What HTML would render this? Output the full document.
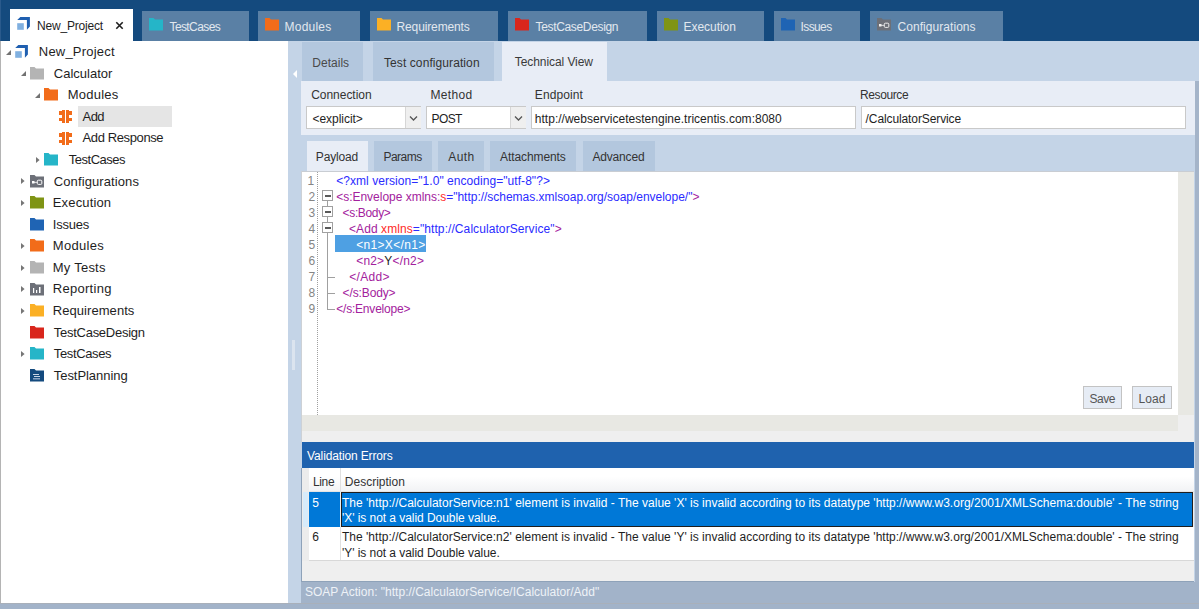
<!DOCTYPE html>
<html><head><meta charset="utf-8"><style>
html,body{margin:0;padding:0;width:1199px;height:609px;overflow:hidden;background:#c4d4e7;}
body>div,body>svg{position:absolute;}
body>div{white-space:pre;font-family:'Liberation Sans', sans-serif;box-sizing:content-box;}
</style></head><body>
<div style="left:0px;top:0px;width:1199px;height:41px;background:#144a7e;"></div>
<div style="left:0px;top:0px;width:1px;height:41px;background:#2a5a8c;"></div>
<div style="left:10px;top:9px;width:123px;height:32px;background:#ffffff;"></div>
<svg style="left:16px;top:14px" width="16" height="17" viewBox="0 0 16 17"><path d="M4.3,3 H13.9 V12.6 L10.9,15.7 V5.9 H1.2 Z" fill="#1f5fb0"/><rect x="1.2" y="9.2" width="6.6" height="6.6" fill="#80b0e0"/></svg>
<svg style="left:115px;top:21px" width="9" height="9" viewBox="0 0 9 9"><path d="M1.3,1.3 L7.7,7.7 M7.7,1.3 L1.3,7.7" stroke="#1e1e1e" stroke-width="1.6"/></svg>
<div style="left:142px;top:11px;width:107px;height:30px;background:#5a80a5;"></div>
<svg style="left:149px;top:18px" width="15" height="13.5" viewBox="0 0 15 13.5"><path d="M0,0 H4.5 L6.0,1.5 H14 V12.5 H0 Z" fill="#25b5c8"/></svg>
<div style="left:258px;top:11px;width:102px;height:30px;background:#5a80a5;"></div>
<svg style="left:265px;top:18px" width="15" height="13.5" viewBox="0 0 15 13.5"><path d="M0,0 H4.5 L6.0,1.5 H14 V12.5 H0 Z" fill="#f26c1a"/></svg>
<div style="left:370px;top:11px;width:128px;height:30px;background:#5a80a5;"></div>
<svg style="left:377px;top:18px" width="15" height="13.5" viewBox="0 0 15 13.5"><path d="M0,0 H4.5 L6.0,1.5 H14 V12.5 H0 Z" fill="#fbb025"/></svg>
<div style="left:508px;top:11px;width:139px;height:30px;background:#5a80a5;"></div>
<svg style="left:515px;top:18px" width="15" height="13.5" viewBox="0 0 15 13.5"><path d="M0,0 H4.5 L6.0,1.5 H14 V12.5 H0 Z" fill="#d9261c"/></svg>
<div style="left:657px;top:11px;width:107px;height:30px;background:#5a80a5;"></div>
<svg style="left:664px;top:18px" width="15" height="13.5" viewBox="0 0 15 13.5"><path d="M0,0 H4.5 L6.0,1.5 H14 V12.5 H0 Z" fill="#7f9414"/></svg>
<div style="left:774px;top:11px;width:86px;height:30px;background:#5a80a5;"></div>
<svg style="left:781px;top:18px" width="15" height="13.5" viewBox="0 0 15 13.5"><path d="M0,0 H4.5 L6.0,1.5 H14 V12.5 H0 Z" fill="#1f64b4"/></svg>
<div style="left:870px;top:11px;width:133px;height:30px;background:#5a80a5;"></div>
<svg style="left:877px;top:18px" width="15" height="13.5" viewBox="0 0 15 13.5"><path d="M0,0 H4.5 L6.0,1.5 H14 V12.5 H0 Z" fill="#6d7078"/><rect x="2" y="6" width="2.5" height="2.5" fill="#eee"/><rect x="4" y="6.9" width="3" height="0.8" fill="#eee"/><rect x="7.3" y="5.2" width="4.5" height="4.2" rx="1" fill="none" stroke="#eee" stroke-width="1"/></svg>
<div style="left:0px;top:41px;width:1px;height:562px;background:#b4b4b4;"></div>
<div style="left:1px;top:41px;width:287px;height:562px;background:#ffffff;"></div>
<div style="left:0px;top:603px;width:1199px;height:1px;background:#a9b0ba;"></div>
<div style="left:0px;top:604px;width:1199px;height:5px;background:#a2b3c9;"></div>
<div style="left:78px;top:106px;width:94px;height:21px;background:#e5e5e5;"></div>
<svg style="left:14px;top:42px" width="16" height="17" viewBox="0 0 16 17"><path d="M4.3,3 H13.9 V12.6 L10.9,15.7 V5.9 H1.2 Z" fill="#1f5fb0"/><rect x="1.2" y="9.2" width="6.6" height="6.6" fill="#80b0e0"/></svg>
<svg style="left:6px;top:50px" width="6" height="6" viewBox="0 0 6 6"><path d="M5,0 V5 H0 Z" fill="#727272"/></svg>
<svg style="left:30px;top:67px" width="15" height="13.5" viewBox="0 0 15 13.5"><path d="M0,0 H4.5 L6.0,1.5 H14 V12.5 H0 Z" fill="#b4b4b4"/></svg>
<svg style="left:21px;top:71px" width="6" height="6" viewBox="0 0 6 6"><path d="M5,0 V5 H0 Z" fill="#727272"/></svg>
<svg style="left:44px;top:88px" width="15" height="13.5" viewBox="0 0 15 13.5"><path d="M0,0 H4.5 L6.0,1.5 H14 V12.5 H0 Z" fill="#f26c1a"/></svg>
<svg style="left:35px;top:93px" width="6" height="6" viewBox="0 0 6 6"><path d="M5,0 V5 H0 Z" fill="#727272"/></svg>
<svg style="left:59px;top:110px" width="14" height="14" viewBox="0 0 14 14"><path d="M3,0 H6 V13 H3 V11 H0 V8 H3 V5 H0 V1 H3 Z M7,0 H10 V1 H13 V5 H10 V8 H13 V11 H10 V13 H7 Z" fill="#f26c1a"/></svg>
<svg style="left:59px;top:132px" width="14" height="14" viewBox="0 0 14 14"><path d="M3,0 H6 V13 H3 V11 H0 V8 H3 V5 H0 V1 H3 Z M7,0 H10 V1 H13 V5 H10 V8 H13 V11 H10 V13 H7 Z" fill="#f26c1a"/></svg>
<svg style="left:44px;top:153px" width="15" height="13.5" viewBox="0 0 15 13.5"><path d="M0,0 H4.5 L6.0,1.5 H14 V12.5 H0 Z" fill="#25b5c8"/></svg>
<svg style="left:36px;top:157px" width="5" height="7" viewBox="0 0 5 7"><path d="M0,0 L3.6,3 L0,6 Z" fill="#767676"/></svg>
<svg style="left:30px;top:175px" width="15" height="13.5" viewBox="0 0 15 13.5"><path d="M0,0 H4.5 L6.0,1.5 H14 V12.5 H0 Z" fill="#6d7078"/><rect x="2" y="6" width="2.5" height="2.5" fill="#fff"/><rect x="4" y="6.9" width="3" height="0.8" fill="#fff"/><rect x="7.3" y="5.2" width="4.5" height="4.2" rx="1" fill="none" stroke="#fff" stroke-width="1"/></svg>
<svg style="left:21px;top:178px" width="5" height="7" viewBox="0 0 5 7"><path d="M0,0 L3.6,3 L0,6 Z" fill="#767676"/></svg>
<svg style="left:30px;top:196px" width="15" height="13.5" viewBox="0 0 15 13.5"><path d="M0,0 H4.5 L6.0,1.5 H14 V12.5 H0 Z" fill="#7f9414"/></svg>
<svg style="left:21px;top:200px" width="5" height="7" viewBox="0 0 5 7"><path d="M0,0 L3.6,3 L0,6 Z" fill="#767676"/></svg>
<svg style="left:30px;top:218px" width="15" height="13.5" viewBox="0 0 15 13.5"><path d="M0,0 H4.5 L6.0,1.5 H14 V12.5 H0 Z" fill="#1f64b4"/></svg>
<svg style="left:30px;top:239px" width="15" height="13.5" viewBox="0 0 15 13.5"><path d="M0,0 H4.5 L6.0,1.5 H14 V12.5 H0 Z" fill="#f26c1a"/></svg>
<svg style="left:21px;top:243px" width="5" height="7" viewBox="0 0 5 7"><path d="M0,0 L3.6,3 L0,6 Z" fill="#767676"/></svg>
<svg style="left:30px;top:261px" width="15" height="13.5" viewBox="0 0 15 13.5"><path d="M0,0 H4.5 L6.0,1.5 H14 V12.5 H0 Z" fill="#b4b4b4"/></svg>
<svg style="left:21px;top:265px" width="5" height="7" viewBox="0 0 5 7"><path d="M0,0 L3.6,3 L0,6 Z" fill="#767676"/></svg>
<svg style="left:30px;top:283px" width="15" height="13.5" viewBox="0 0 15 13.5"><path d="M0,0 H4.5 L6.0,1.5 H14 V12.5 H0 Z" fill="#6d7078"/><rect x="3" y="5" width="1.2" height="5" fill="#fff"/><rect x="6" y="7" width="1.2" height="3" fill="#fff"/><rect x="9" y="4" width="1.5" height="6" fill="#fff"/></svg>
<svg style="left:21px;top:286px" width="5" height="7" viewBox="0 0 5 7"><path d="M0,0 L3.6,3 L0,6 Z" fill="#767676"/></svg>
<svg style="left:30px;top:304px" width="15" height="13.5" viewBox="0 0 15 13.5"><path d="M0,0 H4.5 L6.0,1.5 H14 V12.5 H0 Z" fill="#fbb025"/></svg>
<svg style="left:21px;top:308px" width="5" height="7" viewBox="0 0 5 7"><path d="M0,0 L3.6,3 L0,6 Z" fill="#767676"/></svg>
<svg style="left:30px;top:326px" width="15" height="13.5" viewBox="0 0 15 13.5"><path d="M0,0 H4.5 L6.0,1.5 H14 V12.5 H0 Z" fill="#d9261c"/></svg>
<svg style="left:30px;top:347px" width="15" height="13.5" viewBox="0 0 15 13.5"><path d="M0,0 H4.5 L6.0,1.5 H14 V12.5 H0 Z" fill="#25b5c8"/></svg>
<svg style="left:21px;top:351px" width="5" height="7" viewBox="0 0 5 7"><path d="M0,0 L3.6,3 L0,6 Z" fill="#767676"/></svg>
<svg style="left:30px;top:369px" width="15" height="13.5" viewBox="0 0 15 13.5"><path d="M0,0 H4.5 L6.0,1.5 H14 V12.5 H0 Z" fill="#144a7e"/><rect x="3" y="5" width="6" height="1" fill="#c8d4e4"/><rect x="4" y="7" width="6" height="1" fill="#c8d4e4"/><rect x="3" y="9" width="7" height="1.5" fill="#8aa4c4"/></svg>
<div style="left:288px;top:41px;width:14px;height:562px;background:#c4d4e7;"></div>
<svg style="left:292px;top:70px" width="6" height="8" viewBox="0 0 6 8"><path d="M5,0 V8 L1,4 Z" fill="#ffffff"/></svg>
<div style="left:292px;top:340px;width:3px;height:30px;background:#dbe4ef"></div>
<div style="left:302px;top:41px;width:897px;height:541px;background:#c4d4e7;"></div>
<div style="left:1195px;top:81px;width:4px;height:522px;background:#a4b4c9;"></div>
<div style="left:302px;top:42px;width:61px;height:39px;background:#b3c7de;"></div>
<div style="left:373px;top:42px;width:121px;height:39px;background:#b3c7de;"></div>
<div style="left:502px;top:42px;width:105px;height:39px;background:#e8edf6;"></div>
<div style="left:301px;top:81px;width:894px;height:54px;background:#e8edf6;"></div>
<div style="left:306px;top:106px;width:113px;height:21px;background:#fff;border:1px solid #c9c9c9"></div>
<div style="left:405px;top:107px;width:15px;height:21px;background:#efefef;border-left:1px solid #d6d6d6"></div>
<svg style="left:409px;top:115px" width="9" height="7" viewBox="0 0 9 7"><path d="M1,1.5 L4.5,5 L8,1.5" fill="none" stroke="#555" stroke-width="1.3"/></svg>
<div style="left:426px;top:106px;width:98px;height:21px;background:#fff;border:1px solid #c9c9c9"></div>
<div style="left:510px;top:107px;width:15px;height:21px;background:#efefef;border-left:1px solid #d6d6d6"></div>
<svg style="left:514px;top:115px" width="9" height="7" viewBox="0 0 9 7"><path d="M1,1.5 L4.5,5 L8,1.5" fill="none" stroke="#555" stroke-width="1.3"/></svg>
<div style="left:531px;top:106px;width:323px;height:21px;background:#fff;border:1px solid #c9c9c9"></div>
<div style="left:861px;top:106px;width:323px;height:21px;background:#fff;border:1px solid #c9c9c9"></div>
<div style="left:307px;top:141px;width:61px;height:30px;background:#e8edf6;"></div>
<div style="left:374px;top:141px;width:58px;height:30px;background:#b3c7de;"></div>
<div style="left:438px;top:141px;width:46px;height:30px;background:#b3c7de;"></div>
<div style="left:490px;top:141px;width:86px;height:30px;background:#b3c7de;"></div>
<div style="left:582.5px;top:141px;width:72.5px;height:30px;background:#b3c7de;"></div>
<div style="left:302px;top:172px;width:876px;height:243px;background:#ffffff;"></div>
<div style="left:1178px;top:172px;width:16px;height:243px;background:#e8e8e3;"></div>
<div style="left:302px;top:415px;width:876px;height:16px;background:#e8e8e3;"></div>
<div style="left:1178px;top:415px;width:16px;height:16px;background:#efefef;"></div>
<div style="left:302px;top:431px;width:892px;height:11px;background:#efefef;"></div>
<div style="left:301px;top:171px;width:893px;height:1px;background:#c9cdd3;"></div>
<div style="left:301px;top:171px;width:1px;height:271px;background:#cdd1d6;"></div>
<div style="left:317px;top:172px;width:0;height:243px;border-left:1px dotted #a0a0a0"></div>
<div style="left:327px;top:200px;width:1px;height:109px;background:#a0a0a0"></div>
<div style="left:322px;top:190px;width:9px;height:9px;border:1px solid #a0a0a0;background:#fff"></div>
<div style="left:324.5px;top:195px;width:6px;height:2px;background:#5a5a5a"></div>
<div style="left:322px;top:206px;width:9px;height:9px;border:1px solid #a0a0a0;background:#fff"></div>
<div style="left:324.5px;top:211px;width:6px;height:2px;background:#5a5a5a"></div>
<div style="left:322px;top:222px;width:9px;height:9px;border:1px solid #a0a0a0;background:#fff"></div>
<div style="left:324.5px;top:227px;width:6px;height:2px;background:#5a5a5a"></div>
<div style="left:327px;top:277px;width:8px;height:1px;background:#a0a0a0"></div>
<div style="left:327px;top:293px;width:8px;height:1px;background:#a0a0a0"></div>
<div style="left:327px;top:309px;width:8px;height:1px;background:#a0a0a0"></div>
<div style="left:335px;top:235px;width:91px;height:17px;background:#4ea0e3;"></div>
<div style="left:1083px;top:386px;width:37px;height:21px;background:#e6ecf5;border:1px solid #c3c3c3"></div>
<div style="left:1132px;top:386px;width:38px;height:21px;background:#e6ecf5;border:1px solid #c3c3c3"></div>
<div style="left:302px;top:442px;width:892px;height:26px;background:#1f62ae;"></div>
<div style="left:301px;top:468px;width:1px;height:114px;background:#8ea2b9;"></div>
<div style="left:302px;top:468px;width:892px;height:114px;background:#efefef;"></div>
<div style="left:302px;top:581px;width:892px;height:1px;background:#8ea2b9;"></div>
<div style="left:309px;top:468px;width:885px;height:24px;background:linear-gradient(#ffffff 0%,#ffffff 35%,#f1f2f4 100%)"></div>
<div style="left:302px;top:468px;width:7px;height:93px;background:#ececec;"></div>
<div style="left:340px;top:468px;width:1px;height:24px;background:#e0e0e0;"></div>
<div style="left:309px;top:491px;width:885px;height:1px;background:#e4e4e4;"></div>
<div style="left:309px;top:492px;width:31px;height:35px;background:#0078d7;"></div>
<div style="left:303px;top:492px;width:5px;height:35px;background:#d7ebfa;"></div>
<div style="left:341px;top:492px;width:850px;height:33px;background:#0078d7;border:1px solid #1e1e1e"></div>
<div style="left:309px;top:527px;width:885px;height:34px;background:#ffffff;"></div>
<div style="left:340px;top:527px;width:1px;height:34px;background:#e0e0e0;"></div>
<div style="left:309px;top:560px;width:885px;height:1px;background:#d8d8d8;"></div>
<div style="left:301px;top:582px;width:898px;height:21px;background:#a2b3c9;"></div>
<div style="left:37px;top:19px;font-size:12px;line-height:14px;color:#1e1e1e;letter-spacing:-0.200px;">New_Project</div>
<div style="left:169.5px;top:20px;font-size:12px;line-height:14px;color:#e2e8ef;letter-spacing:-0.600px;">TestCases</div>
<div style="left:284.5px;top:20px;font-size:12px;line-height:14px;color:#e2e8ef;letter-spacing:0.233px;">Modules</div>
<div style="left:396.5px;top:20px;font-size:12px;line-height:14px;color:#e2e8ef;letter-spacing:-0.127px;">Requirements</div>
<div style="left:535.5px;top:20px;font-size:12px;line-height:14px;color:#e2e8ef;letter-spacing:-0.338px;">TestCaseDesign</div>
<div style="left:683.5px;top:20px;font-size:12px;line-height:14px;color:#e2e8ef;letter-spacing:-0.037px;">Execution</div>
<div style="left:800.5px;top:20px;font-size:12px;line-height:14px;color:#e2e8ef;letter-spacing:-0.600px;">Issues</div>
<div style="left:897.5px;top:20px;font-size:12px;line-height:14px;color:#e2e8ef;letter-spacing:0.054px;">Configurations</div>
<div style="left:38.8px;top:44px;font-size:13px;line-height:15px;color:#1e1e1e;letter-spacing:0.200px;">New_Project</div>
<div style="left:53.8px;top:66px;font-size:13px;line-height:15px;color:#1e1e1e;letter-spacing:0.000px;">Calculator</div>
<div style="left:67.7px;top:87px;font-size:13px;line-height:15px;color:#1e1e1e;letter-spacing:0.233px;">Modules</div>
<div style="left:82.6px;top:109px;font-size:13px;line-height:15px;color:#1e1e1e;letter-spacing:-0.600px;">Add</div>
<div style="left:82.6px;top:130px;font-size:13px;line-height:15px;color:#1e1e1e;letter-spacing:-0.391px;">Add Response</div>
<div style="left:68.7px;top:152px;font-size:13px;line-height:15px;color:#1e1e1e;letter-spacing:-0.475px;">TestCases</div>
<div style="left:53.8px;top:174px;font-size:13px;line-height:15px;color:#1e1e1e;letter-spacing:0.100px;">Configurations</div>
<div style="left:52.8px;top:195px;font-size:13px;line-height:15px;color:#1e1e1e;letter-spacing:0.150px;">Execution</div>
<div style="left:52.8px;top:217px;font-size:13px;line-height:15px;color:#1e1e1e;letter-spacing:-0.200px;">Issues</div>
<div style="left:52.8px;top:238px;font-size:13px;line-height:15px;color:#1e1e1e;letter-spacing:0.317px;">Modules</div>
<div style="left:52.8px;top:260px;font-size:13px;line-height:15px;color:#1e1e1e;letter-spacing:0.229px;">My Tests</div>
<div style="left:52.8px;top:281px;font-size:13px;line-height:15px;color:#1e1e1e;letter-spacing:0.275px;">Reporting</div>
<div style="left:52.8px;top:303px;font-size:13px;line-height:15px;color:#1e1e1e;letter-spacing:0.055px;">Requirements</div>
<div style="left:53.8px;top:325px;font-size:13px;line-height:15px;color:#1e1e1e;letter-spacing:-0.269px;">TestCaseDesign</div>
<div style="left:53.8px;top:346px;font-size:13px;line-height:15px;color:#1e1e1e;letter-spacing:-0.375px;">TestCases</div>
<div style="left:53.8px;top:368px;font-size:13px;line-height:15px;color:#1e1e1e;letter-spacing:-0.055px;">TestPlanning</div>
<div style="left:312.3px;top:56px;font-size:12px;line-height:14px;color:#4a4a4a;letter-spacing:0.017px;">Details</div>
<div style="left:384px;top:56px;font-size:12px;line-height:14px;color:#333;letter-spacing:0.088px;">Test configuration</div>
<div style="left:514.8px;top:55px;font-size:12px;line-height:14px;color:#3a3a3a;letter-spacing:-0.077px;">Technical View</div>
<div style="left:311.2px;top:88px;font-size:12px;line-height:14px;color:#333;letter-spacing:-0.033px;">Connection</div>
<div style="left:430.4px;top:88px;font-size:12px;line-height:14px;color:#333;letter-spacing:0.340px;">Method</div>
<div style="left:534.8px;top:88px;font-size:12px;line-height:14px;color:#333;letter-spacing:0.086px;">Endpoint</div>
<div style="left:860px;top:88px;font-size:12px;line-height:14px;color:#333;letter-spacing:-0.400px;">Resource</div>
<div style="left:312.5px;top:112px;font-size:12px;line-height:14px;color:#1e1e1e;letter-spacing:-0.044px;">&lt;explicit&gt;</div>
<div style="left:431.5px;top:112px;font-size:12px;line-height:14px;color:#1e1e1e;letter-spacing:-0.600px;">POST</div>
<div style="left:534.8px;top:112px;font-size:12px;line-height:14px;color:#1e1e1e;letter-spacing:0.018px;">http://webservicetestengine.tricentis.com:8080</div>
<div style="left:865.6px;top:112px;font-size:12px;line-height:14px;color:#1e1e1e;letter-spacing:-0.106px;">/CalculatorService</div>
<div style="left:315.8px;top:150px;font-size:12px;line-height:14px;color:#333;letter-spacing:-0.167px;">Payload</div>
<div style="left:383.4px;top:150px;font-size:12px;line-height:14px;color:#333;letter-spacing:-0.500px;">Params</div>
<div style="left:448.3px;top:150px;font-size:12px;line-height:14px;color:#333;letter-spacing:0.367px;">Auth</div>
<div style="left:500px;top:150px;font-size:12px;line-height:14px;color:#333;letter-spacing:-0.090px;">Attachments</div>
<div style="left:592.5px;top:150px;font-size:12px;line-height:14px;color:#333;letter-spacing:-0.186px;">Advanced</div>
<div style="left:307.5px;top:174px;font-size:12px;line-height:14px;color:#858585;">1</div>
<div style="left:308.5px;top:190px;font-size:12px;line-height:14px;color:#858585;">2</div>
<div style="left:308.5px;top:206px;font-size:12px;line-height:14px;color:#858585;">3</div>
<div style="left:308.5px;top:222px;font-size:12px;line-height:14px;color:#858585;">4</div>
<div style="left:308.5px;top:238px;font-size:12px;line-height:14px;color:#858585;">5</div>
<div style="left:308.5px;top:254px;font-size:12px;line-height:14px;color:#858585;">6</div>
<div style="left:308.5px;top:270px;font-size:12px;line-height:14px;color:#858585;">7</div>
<div style="left:308.5px;top:286px;font-size:12px;line-height:14px;color:#858585;">8</div>
<div style="left:308.5px;top:302px;font-size:12px;line-height:14px;color:#858585;">9</div>
<div style="left:336.2px;top:174px;font-size:12px;line-height:14px;color:#1e1e1e;letter-spacing:0.051px;"><span style="color:#2b2bff">&lt;?xml version="1.0" encoding="utf-8"?&gt;</span></div>
<div style="left:336.2px;top:190px;font-size:12px;line-height:14px;color:#1e1e1e;letter-spacing:-0.019px;"><span style="color:#a3219d">&lt;s:Envelope xmlns:</span><span style="color:#ff2a2a">s</span><span style="color:#2b2bff">="http://schemas.xmlsoap.org/soap/envelope/"</span><span style="color:#a3219d">&gt;</span></div>
<div style="left:342.6px;top:206px;font-size:12px;line-height:14px;color:#1e1e1e;letter-spacing:-0.357px;"><span style="color:#a3219d">&lt;s:Body&gt;</span></div>
<div style="left:349px;top:222px;font-size:12px;line-height:14px;color:#1e1e1e;letter-spacing:0.081px;"><span style="color:#a3219d">&lt;Add </span><span style="color:#ff2a2a">xmlns</span><span style="color:#2b2bff">="http://CalculatorService"</span><span style="color:#a3219d">&gt;</span></div>
<div style="left:356.2px;top:238px;font-size:12px;line-height:14px;color:#1e1e1e;letter-spacing:0.322px;"><span style="color:#ffffff">&lt;n1&gt;X&lt;/n1&gt;</span></div>
<div style="left:356.2px;top:254px;font-size:12px;line-height:14px;color:#1e1e1e;letter-spacing:0.189px;"><span style="color:#a3219d">&lt;n2&gt;</span><span style="color:#1e1e1e">Y</span><span style="color:#a3219d">&lt;/n2&gt;</span></div>
<div style="left:349.3px;top:270px;font-size:12px;line-height:14px;color:#1e1e1e;letter-spacing:0.320px;"><span style="color:#a3219d">&lt;/Add&gt;</span></div>
<div style="left:342.6px;top:286px;font-size:12px;line-height:14px;color:#1e1e1e;letter-spacing:-0.125px;"><span style="color:#a3219d">&lt;/s:Body&gt;</span></div>
<div style="left:336.2px;top:302px;font-size:12px;line-height:14px;color:#1e1e1e;letter-spacing:-0.200px;"><span style="color:#a3219d">&lt;/s:Envelope&gt;</span></div>
<div style="left:1089.6px;top:392px;font-size:12px;line-height:14px;color:#555;letter-spacing:-0.533px;">Save</div>
<div style="left:1138.4px;top:392px;font-size:12px;line-height:14px;color:#555;letter-spacing:0.100px;">Load</div>
<div style="left:307.1px;top:449px;font-size:12px;line-height:14px;color:#ffffff;letter-spacing:-0.138px;">Validation Errors</div>
<div style="left:313px;top:475px;font-size:12px;line-height:14px;color:#333;letter-spacing:-0.367px;">Line</div>
<div style="left:344.8px;top:475px;font-size:12px;line-height:14px;color:#333;letter-spacing:0.000px;">Description</div>
<div style="left:312.2px;top:496px;font-size:12px;line-height:14px;color:#fff;">5</div>
<div style="left:342px;top:496px;font-size:12px;line-height:14px;color:#fff;letter-spacing:0.014px;">The 'http://CalculatorService:n1' element is invalid - The value 'X' is invalid according to its datatype 'http://www.w3.org/2001/XMLSchema:double' - The string</div>
<div style="left:342px;top:511px;font-size:12px;line-height:14px;color:#fff;letter-spacing:-0.052px;">'X' is not a valid Double value.</div>
<div style="left:312.2px;top:530px;font-size:12px;line-height:14px;color:#1e1e1e;">6</div>
<div style="left:342px;top:530px;font-size:12px;line-height:14px;color:#1e1e1e;letter-spacing:0.014px;">The 'http://CalculatorService:n2' element is invalid - The value 'Y' is invalid according to its datatype 'http://www.w3.org/2001/XMLSchema:double' - The string</div>
<div style="left:342px;top:546px;font-size:12px;line-height:14px;color:#1e1e1e;letter-spacing:-0.052px;">'Y' is not a valid Double value.</div>
<div style="left:304.9px;top:585px;font-size:12px;line-height:14px;color:#eef2f7;letter-spacing:0.009px;">SOAP Action: "http://CalculatorService/ICalculator/Add"</div>
</body></html>
